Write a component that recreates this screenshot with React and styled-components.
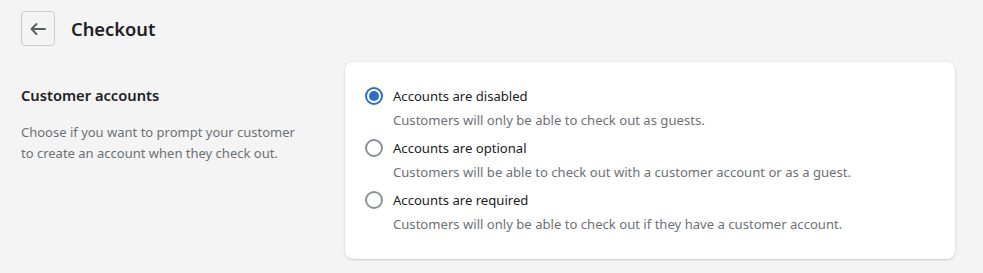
import React, { useState } from "react";
import styled, { createGlobalStyle } from "styled-components";

const Global = createGlobalStyle`
  html, body { margin: 0; padding: 0; background: #f4f4f4; }
  body { font-family: "Segoe UI", "Noto Sans", "Open Sans", sans-serif; color: #202223; -webkit-font-smoothing: antialiased; }
`;

const Page = styled.div`
  padding: 11px 28px 16px 21px;
`;

const Header = styled.header`
  display: flex;
  align-items: center;
  gap: 16px;
  height: 35px;
`;

const BackButton = styled.button`
  width: 34px;
  height: 35px;
  box-sizing: border-box;
  border: 1px solid #c9cccf;
  border-radius: 4px;
  background: transparent;
  display: flex;
  align-items: center;
  justify-content: center;
  padding: 0;
  cursor: pointer;
  color: #5c5f62;
`;

const Title = styled.h1`
  margin: 0;
  font-size: 18.3px;
  font-weight: 600;
  line-height: 28px;
`;

const Section = styled.section`
  display: grid;
  grid-template-columns: 324px 1fr;
  margin-top: 16px;
`;

const Aside = styled.div`
  padding-top: 23px;
`;

const AsideTitle = styled.h2`
  margin: 0;
  font-size: 14.7px;
  font-weight: 600;
  line-height: 20px;
`;

const AsideText = styled.p`
  margin: 17px 0 0;
  font-size: 13px;
  line-height: 21px;
  color: #6d7175;
  max-width: 282px;
`;

const Card = styled.div`
  background: #fff;
  border-radius: 8px;
  box-shadow: 0 0 5px rgba(23, 24, 24, 0.05), 0 1px 2px rgba(0, 0, 0, 0.15);
  padding: 24px 20px 25px 20px;
  display: flex;
  flex-direction: column;
  gap: 8px;
`;

const Option = styled.label`
  display: grid;
  grid-template-columns: 18px 1fr;
  column-gap: 10px;
  cursor: pointer;
`;

const Radio = styled.span`
  width: 18px;
  height: 18px;
  box-sizing: border-box;
  border-radius: 50%;
  border: 2px solid ${(p) => (p.$checked ? "#2c6ecb" : "#8c9196")};
  display: flex;
  align-items: center;
  justify-content: center;
  margin-top: 1px;
  &::after {
    content: "";
    width: 10px;
    height: 10px;
    border-radius: 50%;
    background: ${(p) => (p.$checked ? "#2c6ecb" : "transparent")};
  }
`;

const Label = styled.span`
  font-size: 13.1px;
  line-height: 20px;
  color: #202223;
`;

const Help = styled.span`
  grid-column: 2;
  font-size: 13.1px;
  line-height: 20px;
  margin-top: 4px;
  color: #6d7175;
`;

const options = [
  { id: "disabled", label: "Accounts are disabled", help: "Customers will only be able to check out as guests." },
  { id: "optional", label: "Accounts are optional", help: "Customers will be able to check out with a customer account or as a guest." },
  { id: "required", label: "Accounts are required", help: "Customers will only be able to check out if they have a customer account." },
];

export default function App() {
  const [value, setValue] = useState("disabled");
  return (
    <>
      <Global />
      <Page>
        <Header>
          <BackButton aria-label="Back">
            <svg width="20" height="20" viewBox="0 0 20 20" fill="none">
              <path d="M17 10H3.5M8.5 5l-5 5 5 5" stroke="currentColor" strokeWidth="2" strokeLinecap="round" strokeLinejoin="round" />
            </svg>
          </BackButton>
          <Title>Checkout</Title>
        </Header>
        <Section>
          <Aside>
            <AsideTitle>Customer accounts</AsideTitle>
            <AsideText>Choose if you want to prompt your customer to create an account when they check out.</AsideText>
          </Aside>
          <Card>
            {options.map((o) => (
              <Option key={o.id} onClick={() => setValue(o.id)}>
                <Radio $checked={value === o.id} />
                <Label>{o.label}</Label>
                <Help>{o.help}</Help>
              </Option>
            ))}
          </Card>
        </Section>
      </Page>
    </>
  );
}
